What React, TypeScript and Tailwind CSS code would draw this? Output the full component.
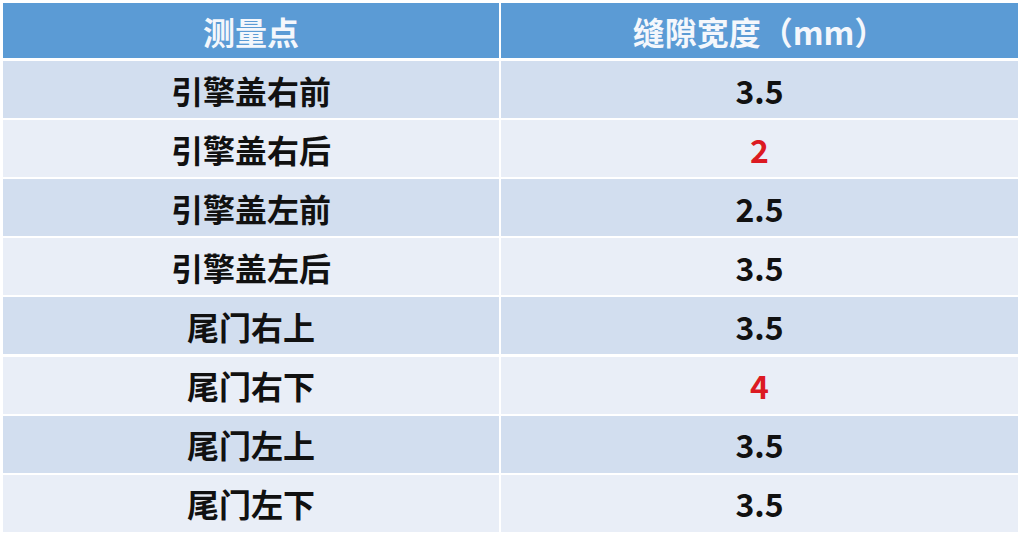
const rows: { name: string; value: string; warn?: boolean }[] = [
  { name: '引擎盖右前', value: '3.5' },
  { name: '引擎盖右后', value: '2', warn: true },
  { name: '引擎盖左前', value: '2.5' },
  { name: '引擎盖左后', value: '3.5' },
  { name: '尾门右上', value: '3.5' },
  { name: '尾门右下', value: '4', warn: true },
  { name: '尾门左上', value: '3.5' },
  { name: '尾门左下', value: '3.5' },
];

export default function App() {
  return (
    <div
      className="w-[1024px] h-[546px] bg-white pl-[3px] pt-[3px] overflow-hidden"
      style={{ fontFamily: '"Noto Sans CJK SC", "Noto Sans", sans-serif' }}
    >
      <div className="w-[1015px] flex flex-col gap-[2.1px]">
        {/* header */}
        <div className="grid grid-cols-[496px_517px] gap-x-[2px] h-[55px] mb-[1px] text-[32px] font-bold text-[#f4f7fc]">
          <div className="bg-[#5b9bd5] flex items-center justify-center">测量点</div>
          <div className="bg-[#5b9bd5] flex items-center justify-center">缝隙宽度（mm）</div>
        </div>

        {rows.map((r, i) => {
          const bg = i % 2 === 0 ? 'bg-[#d2deef]' : 'bg-[#e9eef7]';
          return (
            <div key={r.name} className="grid grid-cols-[496px_517px] gap-x-[2px] h-[57px] text-[32px] font-bold">
              <div className={`${bg} flex items-center justify-center text-[#111]`}>{r.name}</div>
              <div
                className={`${bg} flex items-center justify-center ${r.warn ? 'text-[#dc1a22]' : 'text-[#111]'}`}
              >
                {r.value}
              </div>
            </div>
          );
        })}
      </div>
    </div>
  );
}
